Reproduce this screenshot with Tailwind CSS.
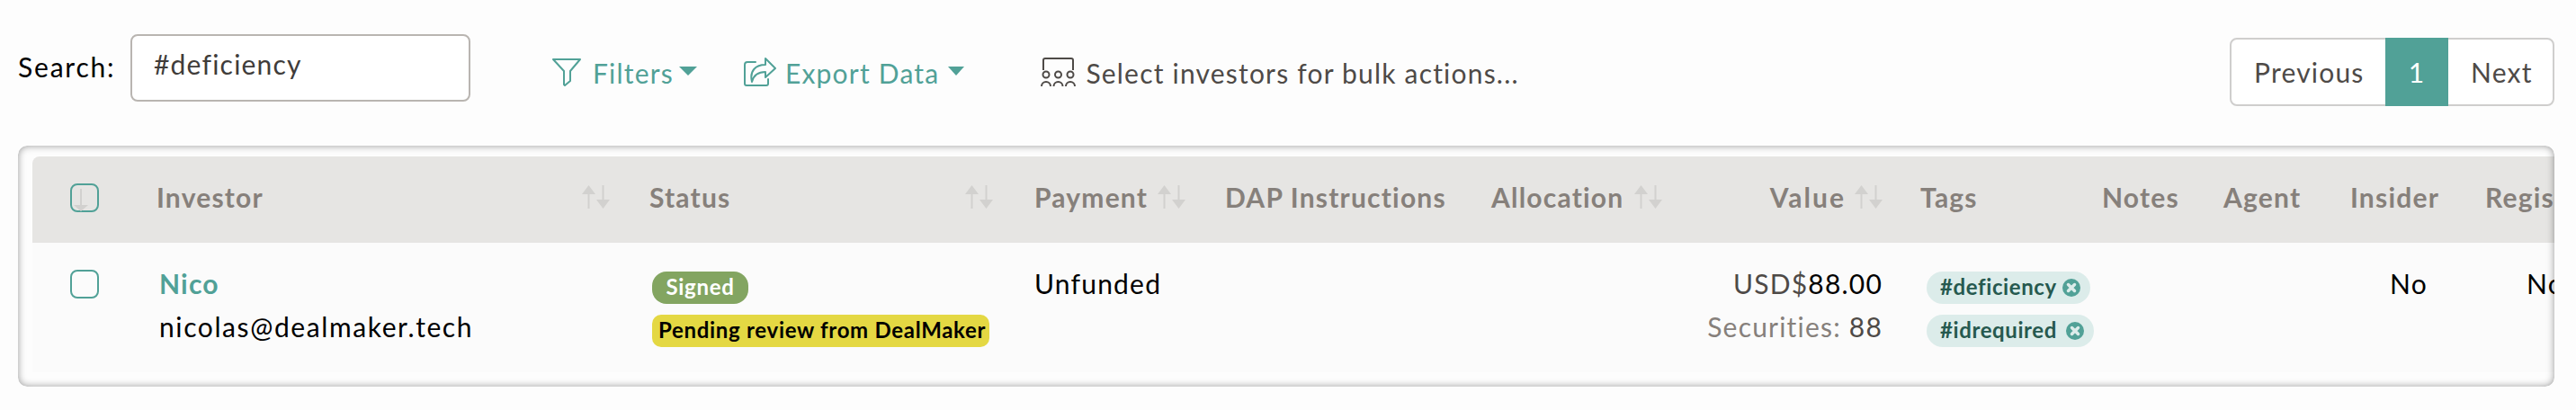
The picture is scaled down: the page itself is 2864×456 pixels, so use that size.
<!DOCTYPE html>
<html lang="en">
<head>
  <meta charset="UTF-8" />
  <title>Investors</title>
  <script src="https://cdn.jsdelivr.net/npm/@tailwindcss/browser@4"></script>
</head>
<body class="bg-[#fdfdfd] text-black font-['Lato',sans-serif] text-[30px] tracking-[1.2px] overflow-hidden">
  <svg class="hidden">
    <symbol id="sort" viewBox="0 0 31 26">
      <path d="M6.5 8h2v18h-2zM0 10 7.5 0 15 10zM22.500 0h2v18h-2zM16 16h15l-7.500 10z" fill="#d2d1cf" />
    </symbol>
    <symbol id="close" viewBox="0 0 20 20">
      <circle cx="10" cy="10" r="10" fill="#51a197" />
      <path d="M6.500 6.500l7 7M13.500 6.500l-7 7" stroke="#dcecea" stroke-width="3.500" stroke-linecap="round" />
    </symbol>
  </svg>

  <!-- TOOLBAR -->
  <div class="h-[162px] pl-5 pr-6 flex items-start">
    <label class="mt-[54px] leading-[40px] w-[125px] shrink-0 tracking-[1.8px]">Search:</label>
    <div class="mt-[38px] w-[378px] h-[75px] shrink-0 border-2 border-[#b9b5b1] rounded-lg bg-white pl-6 pt-[11px] leading-[40px] text-[#403c3a]">#deficiency</div>

    <button class="mt-[64px] ml-[91px] flex items-start text-[#51a197]">
      <svg class="w-8 h-8" viewBox="0 0 32 32" fill="none" stroke="#51a197" stroke-width="2" stroke-linejoin="round"><path d="M1 2H31L20 15V26L14 31 13 30V15Z" /></svg>
      <span class="ml-[13px] leading-[40px] -mt-[3px]">Filters</span>
      <span class="ml-[6px] mt-[10px] w-0 h-0 border-x-[10px] border-x-transparent border-t-[10px] border-t-[#51a197]"></span>
    </button>

    <button class="mt-[64px] ml-[52px] flex items-start text-[#51a197]">
      <svg class="w-9 h-8" viewBox="0 0 36 32" fill="none" stroke="#51a197" stroke-width="2" stroke-linejoin="round" stroke-linecap="round"><path d="M13 5H4a3 3 0 0 0-3 3v21a2 2 0 0 0 2 2h22a2 2 0 0 0 2-2v-5" /><path d="M24 1 35 12 24 22V16C16 16 11 19 9 27 6 15 13 8 24 8Z" /></svg>
      <span class="ml-[10px] leading-[40px] -mt-[3px]">Export Data</span>
      <span class="ml-[10px] mt-[10px] w-0 h-0 border-x-[9px] border-x-transparent border-t-[10px] border-t-[#51a197]"></span>
    </button>

    <button class="mt-[64px] ml-[85px] flex items-start text-[#4e4a47]">
      <svg class="w-[39px] h-8" viewBox="0 0 39 32" fill="none" stroke="#4e4a47" stroke-width="2"><path d="M3 14V3a2 2 0 0 1 2-2H34a2 2 0 0 1 2 2V14" /><circle cx="6" cy="19" r="3.500" /><circle cx="19.500" cy="19" r="3.500" /><circle cx="33" cy="19" r="3.500" /><path d="M1 32a5 5 0 0 1 10 0M14.500 32a5 5 0 0 1 10 0M28 32a5 5 0 0 1 10 0" /></svg>
      <span class="ml-[11px] leading-[40px] -mt-[3px]">Select investors for bulk actions...</span>
    </button>

    <nav class="mt-[42px] ml-auto h-[76px] w-[361px] shrink-0 flex border-2 border-[#cfcecd] rounded-lg text-[#4e4a47] leading-[72px] bg-white">
      <a class="w-[171px] pl-[25px]">Previous</a>
      <a class="w-[70px] -my-[2px] bg-[#51a197] text-white text-center leading-[76px]">1</a>
      <a class="flex-1 pl-[25px]">Next</a>
    </nav>
  </div>

  <!-- TABLE -->
  <div class="relative ml-5 w-[2820px] h-[268px] rounded-[10px] overflow-hidden pl-4 pt-3">
    <div class="rounded-tl-lg overflow-hidden">
      <div class="relative h-24 w-max bg-[#e6e5e3] grid grid-cols-[114px_548px_428px_212px_296px_234px_243px_202px_135px_141px_150px_250px] pt-[27px] leading-9 font-bold text-[#86807b]">
        <div class="pl-[42px] pt-[3px]">
          <div class="relative w-8 h-8 border-2 border-[#51a197] rounded-lg">
            <svg class="absolute left-[2px] top-1 w-4 h-[25px]" viewBox="0 0 16 25"><path d="M7 0h2v18H7zM0 18h16l-8 7z" fill="#d2d1cf" /></svg>
          </div>
        </div>
        <div class="pl-6 pr-5 flex justify-between">Investor <svg class="w-[31px] h-[26px] mt-[5px]"><use href="#sort" /></svg></div>
        <div class="pl-6 pr-[22px] flex justify-between">Status <svg class="w-[31px] h-[26px] mt-[5px]"><use href="#sort" /></svg></div>
        <div class="pl-6 pr-5 flex justify-between">Payment <svg class="w-[31px] h-[26px] mt-[5px]"><use href="#sort" /></svg></div>
        <div class="pl-6">DAP Instructions</div>
        <div class="pl-6 pr-5 flex justify-between">Allocation <svg class="w-[31px] h-[26px] mt-[5px]"><use href="#sort" /></svg></div>
        <div class="pr-[18px] flex justify-end gap-[10px] tracking-[2px]">Value <svg class="w-[31px] h-[26px] mt-[5px]"><use href="#sort" /></svg></div>
        <div class="pl-6">Tags</div>
        <div class="pl-6">Notes</div>
        <div class="pl-6">Agent</div>
        <div class="pl-6">Insider</div>
        <div class="pl-6 whitespace-nowrap">Registered</div>
      </div>

      <div class="h-36 w-max bg-[#fbfbfb] grid grid-cols-[114px_548px_428px_212px_296px_234px_243px_202px_135px_141px_150px_250px] pt-[21px] leading-[48px]">
        <div class="pl-[42px] pt-[9px]">
          <div class="w-8 h-8 border-2 border-[#51a197] rounded-lg"></div>
        </div>
        <div class="pl-[27px]">
          <div class="font-bold text-[#51a197]">Nico</div>
          <div class="tracking-[1.6px]">nicolas@dealmaker.tech</div>
        </div>
        <div class="pl-[27px] pt-[11px] flex flex-col items-start gap-3 text-[24px] font-bold leading-[33px] tracking-[0.7px]">
          <span class="h-9 w-[107px] rounded-2xl bg-[#83a561] text-white text-center">Signed</span>
          <span class="h-9 w-[375px] rounded-[10px] bg-[#e4d843] pl-[7px] whitespace-nowrap">Pending review from DealMaker</span>
        </div>
        <div class="pl-6">Unfunded</div>
        <div></div>
        <div></div>
        <div class="pr-[18px] text-right whitespace-nowrap">
          <div><span class="text-[#4e4a47]">USD$</span>88.00</div>
          <div class="text-[#4e4a47]"><span class="text-[#86807b]">Securities:</span> 88</div>
        </div>
        <div class="pl-[31px] pt-[11px] flex flex-col items-start gap-3 text-[24px] font-bold leading-9 tracking-[0.6px] text-[#26594f]">
          <span class="h-9 w-[182px] pl-[15px] rounded-[18px] bg-[#dcecea] flex items-center justify-between pr-[11px]"><span class="-mt-[3px]">#deficiency</span> <svg class="w-5 h-5"><use href="#close" /></svg></span>
          <span class="h-9 w-[186px] pl-[15px] rounded-[18px] bg-[#dcecea] flex items-center justify-between pr-[11px]"><span class="-mt-[3px]">#idrequired</span> <svg class="w-5 h-5"><use href="#close" /></svg></span>
        </div>
        <div></div>
        <div></div>
        <div class="pl-[68px]">No</div>
        <div class="pl-[70px]">No</div>
      </div>
    </div>
    <!-- inner shadow sits over the table edge -->
    <div class="absolute inset-0 rounded-[10px] pointer-events-none shadow-[inset_0_0_9px_rgba(0,0,0,0.4)]"></div>
  </div>
</body>
</html>
